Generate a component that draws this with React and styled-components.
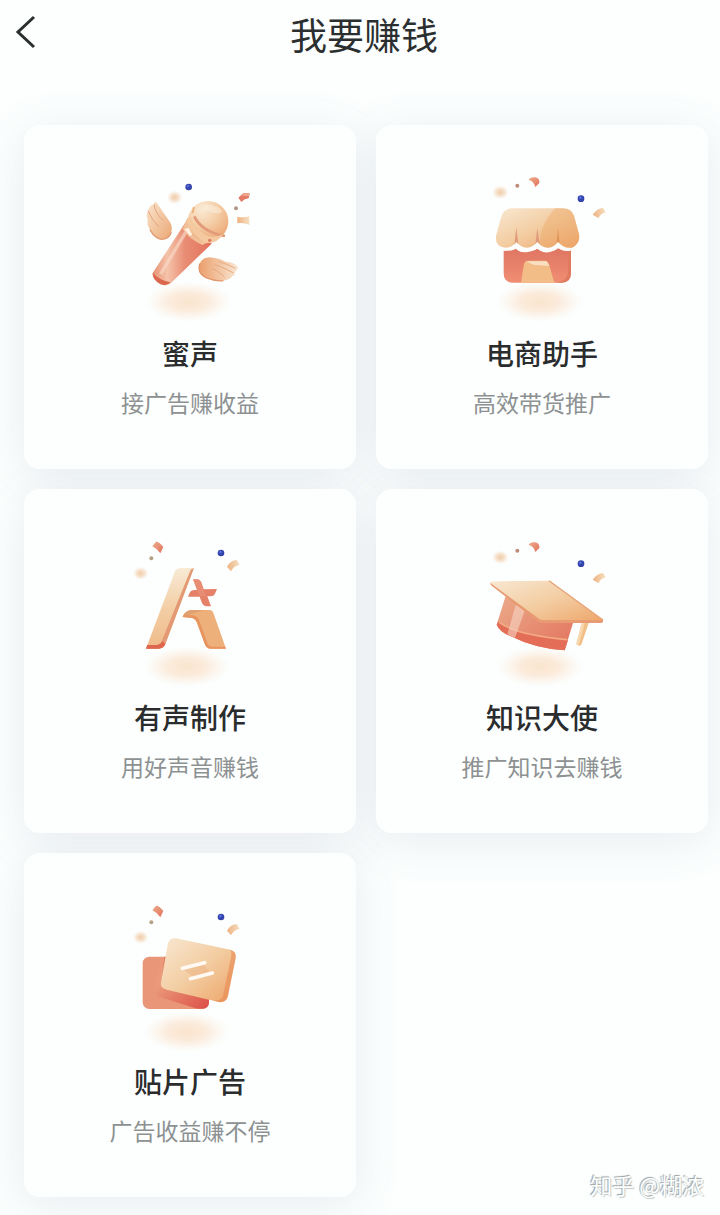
import React from 'react';
import styled, { createGlobalStyle } from 'styled-components';

const GlobalStyle = createGlobalStyle`
    body {
        margin: 0;
        background-color: #fcfffe;
        font-family: "Noto Sans CJK SC", sans-serif;
    }
`;

const Page = styled.div`
    box-sizing: border-box;
    padding-bottom: 18px;
    overflow: hidden;
`;

const Header = styled.header`
    display: grid;
    grid-template-columns: 60px 1fr 60px;
    align-items: center;
    height: 68px;
    margin-bottom: 57px;
    padding-left: 8px;
`;

const BackButton = styled.button`
    display: flex;
    align-items: center;
    height: 68px;
    padding: 0 0 4px 6px;
    background: none;
    border: none;
    cursor: pointer;
`;

const PageTitle = styled.h1`
    margin: 0;
    font-size: 37px;
    font-weight: 400;
    line-height: 68px;
    text-align: center;
    color: #2c2f30;
`;

const CardGrid = styled.main`
    display: grid;
    grid-template-columns: 1fr 1fr;
    gap: 20px;
    padding: 0 12px 0 24px;
    isolation: isolate;
`;

/* the shadow sits under every card so it never darkens a neighbour */
const Card = styled.a`
    position: relative;
    display: flex;
    flex-direction: column;
    align-items: center;
    box-sizing: border-box;
    min-height: 344px;
    padding: 40px 12px 44px;
    background-color: #fcfffe;
    border-radius: 16px;
    text-decoration: none;

    &::before {
        content: '';
        position: absolute;
        inset: 0;
        z-index: -1;
        border-radius: 16px;
        box-shadow: 0 8px 48px rgba(90, 100, 140, 0.12);
    }
`;

const Art = styled.svg`
    width: 160px;
    height: 160px;
`;

const CardTitle = styled.h2`
    margin: 8px 0 0;
    font-size: 28px;
    font-weight: 500;
    line-height: 40px;
    color: #2a2c2d;
`;

const CardText = styled.p`
    margin: 12px 0 0;
    font-size: 23px;
    line-height: 34px;
    color: #8d9192;
`;

const Credit = styled.p`
    place-self: end;
    margin: 0;
    padding-right: 4px;
    font-size: 22px;
    line-height: 26px;
    color: #fcfffe;
    text-shadow: -1px -1px 1px #9a9f9f, 1px 1px 1px #c4c8c8;
`;

const Defs = () => (
    <svg width="0" height="0" style={{ position: 'absolute' }} aria-hidden="true">
        <defs>
            <linearGradient id="cream" x1="0" y1="0" x2="1" y2="1">
                <stop offset="0" stopColor="#f8e8d2" />
                <stop offset="0.5" stopColor="#f3cda2" />
                <stop offset="1" stopColor="#eda468" />
            </linearGradient>
            <linearGradient id="coral" x1="0" y1="0" x2="1" y2="1">
                <stop offset="0" stopColor="#ecad8c" />
                <stop offset="1" stopColor="#e2715c" />
            </linearGradient>
            <linearGradient id="handle" x1="0" y1="0" x2="1" y2="0">
                <stop offset="0" stopColor="#e79273" />
                <stop offset="0.25" stopColor="#f4c3a9" />
                <stop offset="0.55" stopColor="#e98d74" />
                <stop offset="1" stopColor="#e2705b" />
            </linearGradient>
            <linearGradient id="wing" x1="0" y1="0" x2="1" y2="1">
                <stop offset="0" stopColor="#f9e5cd" />
                <stop offset="1" stopColor="#eba775" />
            </linearGradient>
            <linearGradient id="wingBack" x1="1" y1="0" x2="0" y2="0">
                <stop offset="0" stopColor="#f9e8d5" />
                <stop offset="1" stopColor="#eb9f6c" />
            </linearGradient>
            <linearGradient id="paper" x1="0" y1="0" x2="1" y2="0">
                <stop offset="0" stopColor="#edb181" />
                <stop offset="1" stopColor="#f6e1c2" />
            </linearGradient>
            <linearGradient id="stroke" x1="0" y1="0" x2="0" y2="1">
                <stop offset="0" stopColor="#f8ead5" />
                <stop offset="0.5" stopColor="#f3cea5" />
                <stop offset="1" stopColor="#efbb8a" />
            </linearGradient>
            <linearGradient id="shopWall" x1="0" y1="0" x2="0" y2="1">
                <stop offset="0" stopColor="#df7562" />
                <stop offset="1" stopColor="#ef8e73" />
            </linearGradient>
            <linearGradient id="redCard" x1="0" y1="0" x2="1" y2="1">
                <stop offset="0.3" stopColor="#ea9a7a" />
                <stop offset="1" stopColor="#dc4f47" />
            </linearGradient>
            <radialGradient id="ball" cx="0.35" cy="0.2" r="0.85">
                <stop offset="0" stopColor="#faead5" />
                <stop offset="0.5" stopColor="#f4cda5" />
                <stop offset="1" stopColor="#eca673" />
            </radialGradient>
            <radialGradient id="ground">
                <stop offset="0" stopColor="#fae4cd" />
                <stop offset="0.45" stopColor="#fbe8d6" stopOpacity="0.85" />
                <stop offset="0.75" stopColor="#fcf0e5" stopOpacity="0.5" />
                <stop offset="1" stopColor="#fcf7f2" stopOpacity="0" />
            </radialGradient>
            <radialGradient id="puff">
                <stop offset="0" stopColor="#f1cba6" />
                <stop offset="0.5" stopColor="#f5dcc4" stopOpacity="0.8" />
                <stop offset="1" stopColor="#fcf3ea" stopOpacity="0" />
            </radialGradient>
            <radialGradient id="bead" cx="0.4" cy="0.35">
                <stop offset="0" stopColor="#7184e0" />
                <stop offset="0.5" stopColor="#3448b8" />
                <stop offset="1" stopColor="#3443a6" />
            </radialGradient>
        </defs>
    </svg>
);

const Ground = ({ cx = 200 }) => <ellipse cx={cx} cy="410" rx="132" ry="62" fill="url(#ground)" />;

/* confetti over the letter and the ad cards */
const ConfettiLeft = () => (
    <>
        <path d="M97 49 L108 35 Q118 35 130 51 L121 70 Q113 57 97 49Z" fill="url(#coral)" />
        <circle cx="94" cy="85" r="6" fill="#b5a184" />
        <ellipse cx="62" cy="130" rx="25" ry="21" fill="url(#puff)" />
        <circle cx="303" cy="69" r="10" fill="url(#bead)" />
        <path d="M321 110 Q332 91 350 90 L359 104 Q341 108 333 124Z" fill="url(#paper)" />
    </>
);

/* confetti over the shop and the cap */
const ConfettiRight = () => (
    <>
        <ellipse cx="76" cy="82" rx="27" ry="22" fill="url(#puff)" />
        <circle cx="127" cy="62" r="6" fill="#c08a79" />
        <path d="M161 45 Q166 35 181 37 Q195 41 193 54 L181 66 Q176 48 161 45Z" fill="url(#coral)" />
        <circle cx="318" cy="101" r="10" fill="url(#bead)" />
        <path d="M353 149 Q367 130 384 129 L392 142 Q375 147 371 160Z" fill="url(#paper)" />
    </>
);

const MicArt = () => (
    <g transform="translate(30 0)">
        <Ground cx={206} />
        <ellipse cx="164" cy="97" rx="25" ry="22" fill="url(#puff)" />
        <circle cx="206" cy="66" r="10" fill="url(#bead)" />
        <path d="M355 98 L370 84 L389 85 L386 100 Q374 101 364 111Z" fill="#e37c67" />
        <path d="M370 84 L389 85 L388 93 L364 92Z" fill="#eea78e" />
        <circle cx="348" cy="130" r="6" fill="#b29585" />
        <path d="M352 155 Q371 159 388 154 L388 180 Q371 172 352 175Z" fill="url(#paper)" />
        <path d="M108 110 Q101 112 102 118 Q89 121 84 137 Q77 148 83 163 Q80 180 90 194 Q103 219 124 223 Q147 223 154 202 Q160 182 145 164Z" fill="url(#wing)" />
        <path d="M84 137 Q95 165 117 186 M102 118 Q106 146 130 167" fill="none" stroke="#e3a77f" strokeWidth="3" />
        <path d="M90 194 Q103 219 124 223 Q147 223 154 202" fill="none" stroke="#e39a72" strokeWidth="4" />
        <path d="M355 307 Q345 292 318 290 Q300 280 280 278 Q250 272 239 296 Q231 325 256 337 Q289 350 310 347 Q330 344 338 333 Q346 330 345 321 Q353 316 355 307Z" fill="url(#wingBack)" />
        <path d="M276 312 Q290 312 314 337 M284 299 Q300 302 340 324 M296 290 Q320 296 346 310" fill="none" stroke="#e6ab80" strokeWidth="3" />
        <path d="M239 296 Q231 325 256 337 Q289 350 310 347" fill="none" stroke="#e2946a" strokeWidth="4" />
        <path d="M197 171 L98 324 Q97 343 122 358 Q143 366 156 351 L275 236Z" fill="url(#handle)" />
        <path d="M98 324 Q117 345 151 352 Q140 365 122 358 Q96 343 98 324Z" fill="#db674d" />
        <path d="M204 190 L122 327" fill="none" stroke="#f8d7c4" strokeWidth="10" opacity="0.7" />
        <path d="M202 158 L188 192 Q206 221 247 240 L286 222Z" fill="#f1c099" />
        <path d="M193 193 L207 188 Q225 208 210 213Z" fill="#fff0e2" />
        <circle cx="264" cy="169" r="61" fill="url(#ball)" />
        <path d="M223 154 Q244 200 315 213" fill="none" stroke="#e39a79" strokeWidth="8" />
        <path d="M211 153 Q225 191 250 207 Q281 224 309 207 Q292 237 257 234 Q216 214 202 169Z" fill="#f4c9a0" />
        <ellipse cx="277" cy="132" rx="29" ry="11" fill="#fcf0e2" opacity="0.5" transform="rotate(15 277 132)" />
        <path d="M218 144 L222 126" fill="none" stroke="#efb37b" strokeWidth="6" />
        <circle cx="269" cy="226" r="5" fill="#dc7d5d" />
    </g>
);

const ShopArt = () => (
    <g transform="translate(39 0)">
        <Ground cx={194} />
        <ConfettiRight />
        <path d="M86 248 H288 V324 Q288 353 260 353 H114 Q86 353 86 324Z" fill="url(#shopWall)" />
        <path d="M279 256 H288 V324 Q288 353 260 353 H240 Q279 350 279 318Z" fill="#e07a5f" />
        <path d="M138 353 L147 297 Q149 287 160 287 H207 Q219 287 222 298 L238 353Z" fill="#f3bd88" />
        <path d="M154 289 H215 L223 303 L175 299Z" fill="#fae0c3" />
        <path d="M64 230 Q70 250 94 248 Q115 249 124 237 Q136 257 160 251 Q178 248 187 238 Q202 256 220 252 Q239 249 249 237 Q263 251 284 248 Q303 246 310 232" fill="none" stroke="#fcfffe" strokeWidth="19" />
        <path d="M110 130 H262 Q289 130 297 152 L312 207 Q317 237 291 248 Q265 251 249 230 Q238 247 219 248 Q199 247 187 230 Q175 247 156 248 Q135 247 124 230 Q113 248 91 248 Q59 246 63 212 L78 158 Q85 130 110 130Z" fill="url(#cream)" />
        <path d="M241 130 H262 Q289 130 297 152 L312 207 Q317 237 291 248 Q265 251 249 230 Q238 247 219 248 Q204 247 194 239 Q194 178 241 130Z" fill="#eba565" opacity="0.4" />
        <path d="M124 187 L118 239 L124 230 L130 238Z M187 189 L181 238 L187 230 L194 238Z" fill="#e09a7c" />
        <path d="M249 189 L245 234 L249 230 L254 235Z" fill="#e09355" />
    </g>
);

const LetterArt = () => (
    <g transform="translate(30 3)">
        <Ground cx={200} />
        <ConfettiLeft />
        <path d="M165 124 Q170 114 185 114 H222 L136 342 Q130 356 116 356 H78Z" fill="url(#stroke)" />
        <path d="M212 119 L222 114 L136 342 Q130 356 116 356 H78 L82 345 H111 Q121 344 125 334Z" fill="#e39a74" />
        <path d="M78 356 L82 345 H111 Q121 344 128 333 L136 342 Q130 356 116 356Z" fill="#df674d" />
        <path d="M219 148 H232 Q241 149 245 160 L251 178 L291 177 L284 193 Q281 199 272 199 H262 L273 229 H260 Q249 228 245 217 L239 200 H204 L209 188 Q213 180 224 180 H231Z" fill="#e58069" />
        <path d="M219 148 H232 Q241 149 245 160 L251 178 L258 199 H239Z" fill="#ea9a80" opacity="0.5" />
        <path d="M188 261 Q194 241 216 240 H269 Q277 240 281 251 L318 356 H273 Q259 356 254 341 L231 278 Q225 263 210 263Z" fill="#eeb07a" />
        <path d="M188 261 Q194 241 216 240 H250 L239 244 Q215 252 188 261Z" fill="#e0a072" />
        <path d="M188 261 L190 256 H216 Q233 257 238 272 L263 341 Q267 350 277 350 H316 L318 356 H273 Q259 356 254 341 L231 278 Q225 263 210 263Z" fill="#e8945f" />
    </g>
);

const CapArt = () => (
    <g transform="translate(39 3)">
        <Ground cx={194} />
        <ConfettiRight />
        <path d="M321 277 L342 276 L319 344 Q311 351 304 342Z" fill="#f2bf87" />
        <path d="M321 277 L330 277 L311 346 L304 342Z" fill="#f7d8ae" />
        <path d="M94 191 L65 284 Q74 307 111 320 Q178 354 269 361 L297 269Z" fill="url(#coral)" />
        <path d="M70 274 Q125 314 279 331 L269 361 Q178 354 111 320 Q74 307 65 284Z" fill="#e36d56" />
        <path d="M72 276 Q119 314 277 329" fill="none" stroke="#f2ab84" strokeWidth="5" />
        <path d="M122 225 L150 240 L120 324 L97 313Z" fill="#f8ddcc" opacity="0.55" />
        <path d="M45 155 Q91 152 222 152 L384 270 Q386 279 375 279 L199 273 L48 163Z" fill="url(#cream)" />
        <path d="M45 158 L194 268 Q196 270 206 270 L384 271 Q386 279 375 279 H202 Q194 279 187 273 L48 166Z" fill="#e89b72" />
        <path d="M222 152 L384 270" fill="none" stroke="#e8a276" strokeWidth="4" />
    </g>
);

const AdArt = () => (
    <g transform="translate(30 6)">
        <Ground cx={200} />
        <g transform="translate(0 -3)">
            <ConfettiLeft />
        </g>
        <rect x="68" y="185" width="199" height="157" rx="20" fill="#e99678" />
        <path d="M124 185 L104 281 Q101 302 121 307 L232 341 H247 Q267 341 267 321 V240Z" fill="url(#redCard)" />
        <path d="M133 185 H247 Q267 185 267 205 V315 L142 285 Q121 279 124 263Z" fill="#df7658" />
        <path d="M168 130 L331 164 Q350 170 347 189 L323 306 Q317 324 297 321 L139 284 Q119 279 123 261 L144 145 Q149 127 168 130Z" fill="url(#cream)" />
        <path d="M331 164 Q350 170 347 189 L323 306 Q317 324 297 321 L268 314 Q302 323 309 302 L333 188 Q336 171 331 164Z" fill="#e88951" opacity="0.6" />
        <path d="M193 225 L252 209 L266 230 L222 248Z" fill="#e8a274" opacity="0.3" />
        <path d="M187 220 L254 203 M211 251 L277 234" fill="none" stroke="#fffaf4" strokeWidth="11" strokeLinecap="round" />
    </g>
);

const services = [
    { title: '蜜声', text: '接广告赚收益', Drawing: MicArt },
    { title: '电商助手', text: '高效带货推广', Drawing: ShopArt },
    { title: '有声制作', text: '用好声音赚钱', Drawing: LetterArt },
    { title: '知识大使', text: '推广知识去赚钱', Drawing: CapArt },
    { title: '贴片广告', text: '广告收益赚不停', Drawing: AdArt },
];

const EarnMoneyPage = () => {
    return (
        <Page>
            <GlobalStyle />
            <Defs />
            <Header>
                <BackButton aria-label="返回">
                    <svg width="24" height="34" viewBox="0 0 24 34" fill="none" stroke="#2c2f30" strokeWidth="3">
                        <path d="M20 2 L4 17 L20 32" />
                    </svg>
                </BackButton>
                <PageTitle>我要赚钱</PageTitle>
            </Header>
            <CardGrid>
                {services.map(({ title, text, Drawing }) => (
                    <Card key={title} href="#">
                        <Art viewBox="0 0 480 480" aria-hidden="true">
                            <Drawing />
                        </Art>
                        <CardTitle>{title}</CardTitle>
                        <CardText>{text}</CardText>
                    </Card>
                ))}
                <Credit>知乎 @糊浓</Credit>
            </CardGrid>
        </Page>
    );
};

export default EarnMoneyPage;
